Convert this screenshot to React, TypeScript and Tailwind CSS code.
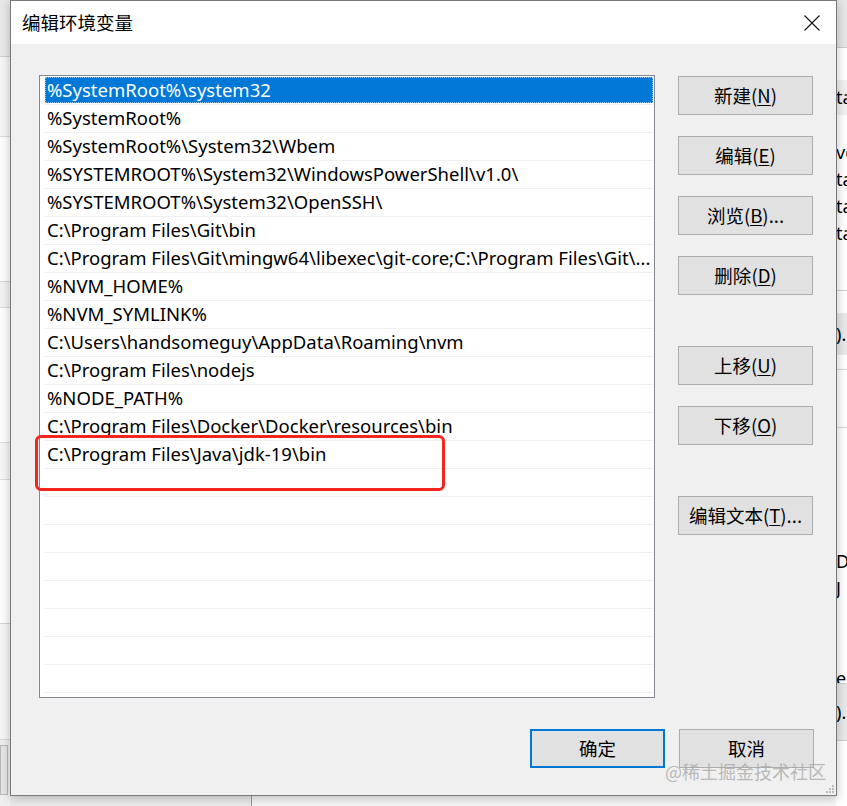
import { ReactNode } from "react";

const paths = [
  "%SystemRoot%\\system32",
  "%SystemRoot%",
  "%SystemRoot%\\System32\\Wbem",
  "%SYSTEMROOT%\\System32\\WindowsPowerShell\\v1.0\\",
  "%SYSTEMROOT%\\System32\\OpenSSH\\",
  "C:\\Program Files\\Git\\bin",
  "C:\\Program Files\\Git\\mingw64\\libexec\\git-core;C:\\Program Files\\Git\\...",
  "%NVM_HOME%",
  "%NVM_SYMLINK%",
  "C:\\Users\\handsomeguy\\AppData\\Roaming\\nvm",
  "C:\\Program Files\\nodejs",
  "%NODE_PATH%",
  "C:\\Program Files\\Docker\\Docker\\resources\\bin",
  "C:\\Program Files\\Java\\jdk-19\\bin",
  "",
  "",
  "",
  "",
  "",
  "",
  "",
  "",
];

function WinButton({
  label,
  hotkey,
  tail = "",
  primary = false,
  className = "",
}: {
  label: string;
  hotkey?: string;
  tail?: string;
  primary?: boolean;
  className?: string;
}) {
  return (
    <div
      className={`w-[135px] h-[39px] flex items-center justify-center bg-[#e1e1e1] text-[18.5px] text-black ${
        primary ? "border-2 border-[#0078d7]" : "border border-[#adadad]"
      } ${className}`}
    >
      <span>
        {label}
        {hotkey && (
          <>
            (<span className="underline underline-offset-2">{hotkey}</span>)
          </>
        )}
        {tail}
      </span>
    </div>
  );
}

function Strip({ children }: { children: ReactNode }) {
  return <div className="flex flex-col h-full">{children}</div>;
}

function Background() {
  return (
    <div className="flex h-full font-['Noto_Sans',sans-serif] text-[18px] text-black">
      {/* left edge of the window behind */}
      <div className="w-[10px] shrink-0">
        <Strip>
          <div className="h-[57px] bg-[#e9e9e9] border-b border-[#cfcfcf]" />
          <div className="h-[80px] bg-[#f7f7f7] border-b border-[#dcdcdc]" />
          <div className="h-[145px] bg-white border-b border-[#d6d6d6]" />
          <div className="h-[26px] bg-[#f3f3f3] border-b border-[#dcdcdc]" />
          <div className="h-[135px] bg-white border-b border-[#dcdcdc]" />
          <div className="h-[37px] bg-[#f7f7f7] border-b border-[#dcdcdc]" />
          <div className="h-[144px] bg-white border-b border-[#d6d6d6]" />
          <div className="h-[116px] bg-[#f7f7f7] border-b border-[#d6d6d6]" />
          <div className="flex-1 bg-[#f0f0f0] pt-[5px]">
            <div className="h-[50px] w-[8px] border border-[#b8b8b8] bg-[#e6e6e6]" />
          </div>
        </Strip>
      </div>

      <div className="flex-1 flex flex-col">
        <div className="flex-1 bg-[#f0f0f0]" />
        <div className="h-[11px] flex">
          <div className="w-[242px] bg-[#ececec] border-r border-[#9a9a9a]" />
          <div className="flex-1 bg-[#f7f7f7]" />
        </div>
      </div>

      {/* right edge of the window behind */}
      <div className="w-[11px] shrink-0 overflow-hidden leading-[27px]">
        <Strip>
          <div className="h-[48px] bg-[#e7e7e7] border-b border-[#cccccc]" />
          <div className="h-[32px] bg-white" />
          <div className="h-[35px] bg-[#f0f0f0] flex items-center">ta</div>
          <div className="h-[24px] bg-white" />
          <div className="bg-white">ve</div>
          <div className="bg-white">ta</div>
          <div className="bg-white">ta</div>
          <div className="bg-white">ta</div>
          <div className="h-[44px] bg-white border-b border-[#cfcfcf]" />
          <div className="h-[22px] bg-white" />
          <div className="h-[42px] bg-[#e9e9e9] flex items-center">).</div>
          <div className="h-[15px] bg-white border-b border-[#d6d6d6]" />
          <div className="h-[58px] bg-white border-b border-[#d6d6d6]" />
          <div className="h-[120px] bg-white" />
          <div className="bg-white">D</div>
          <div className="bg-white">J</div>
          <div className="h-[70px] bg-white" />
          <div className="bg-white border-b border-[#cfcfcf] leading-[12px] h-[12px] overflow-hidden">er</div>
          <div className="h-[57px] bg-[#e9e9e9] border-b border-[#cfcfcf] flex items-center">).</div>
          <div className="flex-1 bg-white" />
        </Strip>
      </div>
    </div>
  );
}

export default function App() {
  return (
    <div className="relative w-[847px] h-[806px] overflow-hidden bg-[#f0f0f0] font-['Noto_Sans','Noto_Sans_CJK_SC',sans-serif]">
      <Background />

      {/* dialog window */}
      <div className="absolute left-[10px] top-0 w-[827px] h-[796px] border border-[#7a7a7a] bg-[#f0f0f0] shadow-[0_2px_10px_rgba(0,0,0,0.25)] flex flex-col">
        <div className="h-[43px] bg-white flex items-center justify-between pl-[11px] pr-[16px] shrink-0">
          <span className="text-[18.5px] text-black font-['Noto_Sans_CJK_SC',sans-serif]">
            编辑环境变量
          </span>
          <svg width="16" height="16" viewBox="0 0 16 16" className="text-[#111]">
            <path d="M0.5 0.5 L15.5 15.5 M15.5 0.5 L0.5 15.5" stroke="currentColor" strokeWidth="1.1" />
          </svg>
        </div>

        <div className="flex-1 flex flex-col relative">
          <div className="flex gap-[23px] pt-[31px] pl-[28px]">
            {/* path list */}
            <div className="relative w-[616px] h-[623px] border border-[#828790] bg-white pt-[1px] pl-[5px] pr-[1px]">
              {paths.map((p, i) => (
                <div key={i} className="h-[28px] border-b border-[#f0f0f0] flex flex-col overflow-hidden">
                  <div
                    className={`h-[26px] flex items-center pl-[2px] text-[18.5px] whitespace-nowrap ${
                      i === 0
                        ? "bg-[#0078d7] text-white outline-1 outline-dotted outline-[#8fc3ec] -outline-offset-1"
                        : "text-black"
                    }`}
                  >
                    {p}
                  </div>
                </div>
              ))}

              {/* red annotation */}
              <div className="absolute left-[-5px] top-[359px] w-[410px] h-[56px] border-[3px] border-[#f3261e] rounded-[6px]" />
            </div>

            {/* side buttons */}
            <div className="flex flex-col pt-[1px] font-['Noto_Sans_CJK_SC',sans-serif]">
              <WinButton label="新建" hotkey="N" />
              <WinButton label="编辑" hotkey="E" className="mt-[21px]" />
              <WinButton label="浏览" hotkey="B" tail="..." className="mt-[21px]" />
              <WinButton label="删除" hotkey="D" className="mt-[21px]" />
              <WinButton label="上移" hotkey="U" className="mt-[51px]" />
              <WinButton label="下移" hotkey="O" className="mt-[21px]" />
              <WinButton label="编辑文本" hotkey="T" tail="..." className="mt-[51px]" />
            </div>
          </div>

          <div className="flex justify-end gap-[14px] mt-[31px] pr-[22px] font-['Noto_Sans_CJK_SC',sans-serif]">
            <WinButton label="确定" primary />
            <WinButton label="取消" />
          </div>

          {/* watermark */}
          <div className="absolute right-[10px] bottom-[10px] text-[18px] text-[#a9a9a9]/80 font-['Noto_Sans_CJK_SC',sans-serif]">
            @稀土掘金技术社区
          </div>

          {/* size grip */}
          <svg width="9" height="9" viewBox="0 0 9 9" className="absolute right-[2px] bottom-[2px]">
            <rect x="7" y="1" width="2" height="2" fill="#bdbdbd" />
            <rect x="4" y="4" width="2" height="2" fill="#bdbdbd" />
            <rect x="7" y="4" width="2" height="2" fill="#bdbdbd" />
            <rect x="1" y="7" width="2" height="2" fill="#bdbdbd" />
            <rect x="4" y="7" width="2" height="2" fill="#bdbdbd" />
            <rect x="7" y="7" width="2" height="2" fill="#bdbdbd" />
          </svg>
        </div>
      </div>
    </div>
  );
}
